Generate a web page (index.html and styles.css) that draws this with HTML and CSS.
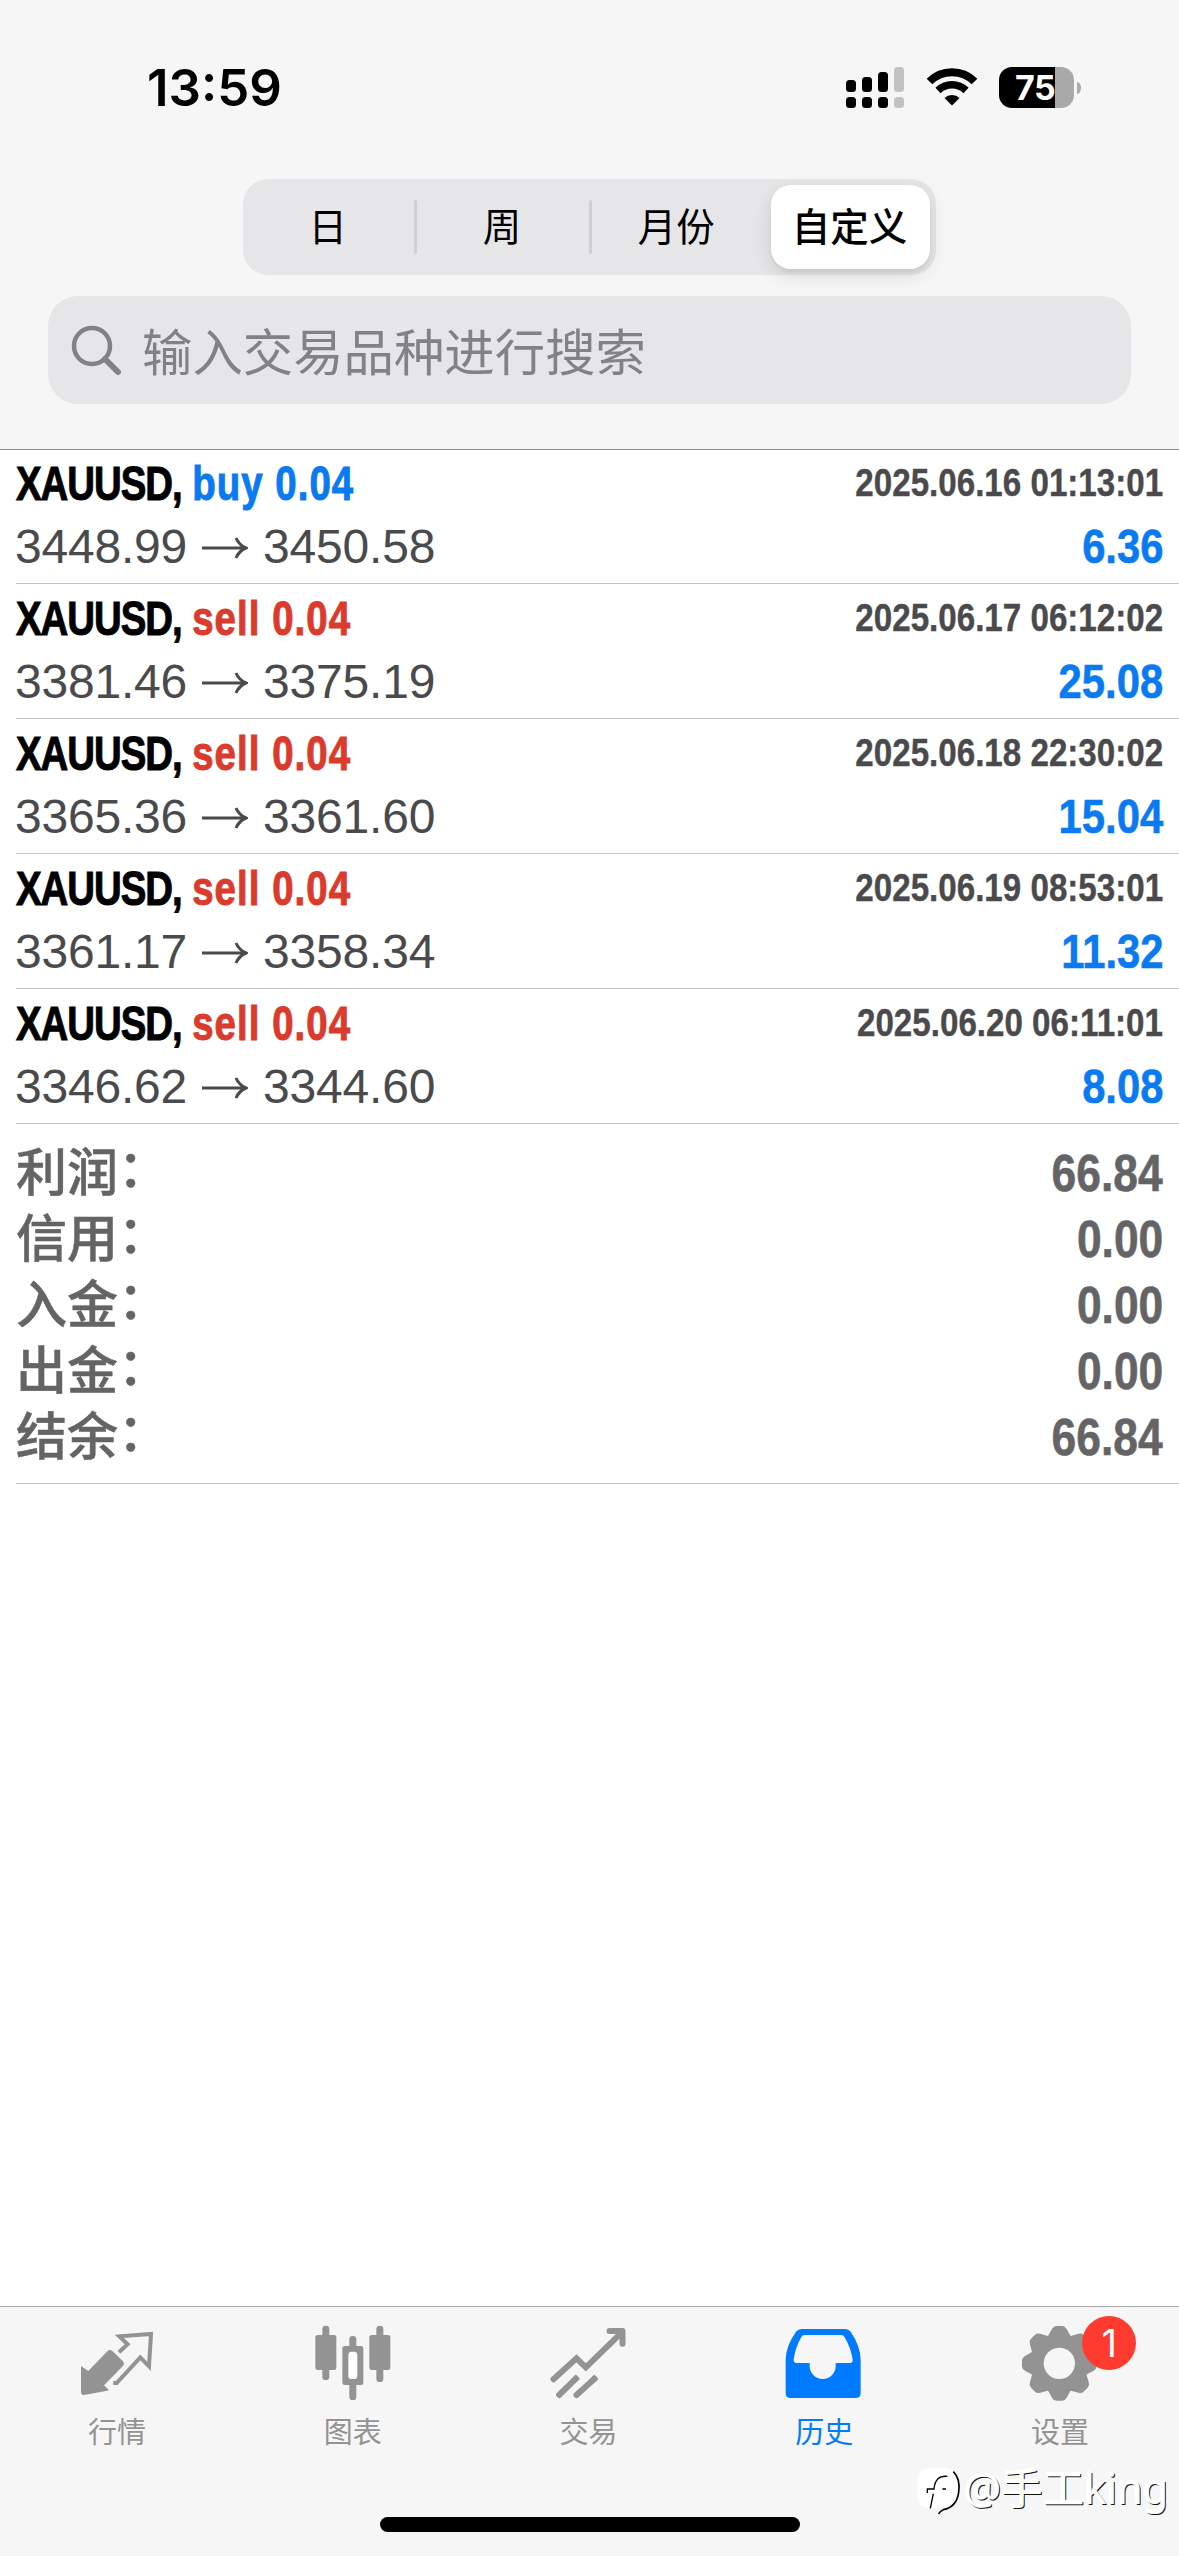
FILE: index.html
```html
<!DOCTYPE html>
<html lang="zh-CN">
<head>
<meta charset="utf-8">
<title>历史</title>
<link rel="stylesheet" href="styles.css">
</head>
<body>
<div class="screen">
  <header class="header">
    <div class="status">
      <span class="time">13:59</span>
      <div class="indicators">
        <svg class="signal" width="58" height="41" viewBox="0 0 58 41">
          <rect x="0" y="13" width="10" height="12" rx="3.5"/><rect x="16" y="10" width="10" height="15" rx="3.5"/><rect x="32" y="5" width="10" height="20" rx="3.5"/><rect class="dim" x="48" y="0" width="10" height="25" rx="3.5"/>
          <rect x="0" y="30" width="10" height="11" rx="3.5"/><rect x="16" y="30" width="10" height="11" rx="3.5"/><rect x="32" y="30" width="10" height="11" rx="3.5"/><rect class="dim" x="48" y="30" width="10" height="11" rx="3.5"/>
        </svg>
        <svg class="wifi" width="52" height="38" viewBox="0 0 52 38">
          <path d="M3.500 13.500A32 32 0 0 1 48.500 13.500" fill="none" stroke="#000" stroke-width="8"/>
          <path d="M12 22.500A20 20 0 0 1 40 22.500" fill="none" stroke="#000" stroke-width="7.500"/>
          <path d="M18.500 30A11 11 0 0 1 33.500 30L26 37.500Z"/>
        </svg>
        <div class="battery"><span class="level">75</span></div>
        <span class="tip"></span>
      </div>
    </div>
    <nav class="segments">
      <span class="segment">日</span><i class="divider"></i><span class="segment">周</span><i class="divider"></i><span class="segment">月份</span><span class="segment selected">自定义</span>
    </nav>
    <div class="search">
      <svg width="52" height="52" viewBox="0 0 52 52" fill="none" stroke="#828285"><circle cx="22" cy="22" r="18" stroke-width="4.500"/><path d="M35 35L48 48" stroke-width="6" stroke-linecap="round"/></svg>
      <span class="placeholder">输入交易品种进行搜索</span>
    </div>
  </header>

  <main class="content">
    <article class="deal">
      <div class="line"><span class="title"><b class="symbol">XAUUSD,</b> <b class="side buy">buy 0.04</b></span><time class="date">2025.06.16 01:13:01</time></div>
      <div class="line"><span class="prices">3448.99<svg class="arrow" width="46" height="22" viewBox="0 0 46 22"><path d="M0 11H44M34 1Q37 8 44 11Q37 14 34 21"/></svg>3450.58</span><span class="profit">6.36</span></div>
    </article>
    <article class="deal">
      <div class="line"><span class="title"><b class="symbol">XAUUSD,</b> <b class="side sell">sell 0.04</b></span><time class="date">2025.06.17 06:12:02</time></div>
      <div class="line"><span class="prices">3381.46<svg class="arrow" width="46" height="22" viewBox="0 0 46 22"><path d="M0 11H44M34 1Q37 8 44 11Q37 14 34 21"/></svg>3375.19</span><span class="profit">25.08</span></div>
    </article>
    <article class="deal">
      <div class="line"><span class="title"><b class="symbol">XAUUSD,</b> <b class="side sell">sell 0.04</b></span><time class="date">2025.06.18 22:30:02</time></div>
      <div class="line"><span class="prices">3365.36<svg class="arrow" width="46" height="22" viewBox="0 0 46 22"><path d="M0 11H44M34 1Q37 8 44 11Q37 14 34 21"/></svg>3361.60</span><span class="profit">15.04</span></div>
    </article>
    <article class="deal">
      <div class="line"><span class="title"><b class="symbol">XAUUSD,</b> <b class="side sell">sell 0.04</b></span><time class="date">2025.06.19 08:53:01</time></div>
      <div class="line"><span class="prices">3361.17<svg class="arrow" width="46" height="22" viewBox="0 0 46 22"><path d="M0 11H44M34 1Q37 8 44 11Q37 14 34 21"/></svg>3358.34</span><span class="profit">11.32</span></div>
    </article>
    <article class="deal">
      <div class="line"><span class="title"><b class="symbol">XAUUSD,</b> <b class="side sell">sell 0.04</b></span><time class="date">2025.06.20 06:11:01</time></div>
      <div class="line"><span class="prices">3346.62<svg class="arrow" width="46" height="22" viewBox="0 0 46 22"><path d="M0 11H44M34 1Q37 8 44 11Q37 14 34 21"/></svg>3344.60</span><span class="profit">8.08</span></div>
    </article>
    <section class="summary">
      <div class="total"><span class="label">利润<i>：</i></span><span class="amount">66.84</span></div>
      <div class="total"><span class="label">信用<i>：</i></span><span class="amount">0.00</span></div>
      <div class="total"><span class="label">入金<i>：</i></span><span class="amount">0.00</span></div>
      <div class="total"><span class="label">出金<i>：</i></span><span class="amount">0.00</span></div>
      <div class="total"><span class="label">结余<i>：</i></span><span class="amount">66.84</span></div>
    </section>
  </main>

  <footer class="tabbar">
    <nav class="tabs">
      <a class="tab">
        <svg width="80" height="80" viewBox="234 99 240 240"><path d="M243 228L265 243L322 184Q330 176 338 184L368 213Q376 222 368 229L312 286L327 300L318 303L252 315Q243 315 243 306Z"/><path d="M357 187L383 163L358 139L453 132L447 229L421 202L350 279H340" fill="none" stroke="currentColor" stroke-width="12"/></svg>
        <span>行情</span>
      </a>
      <a class="tab">
        <svg width="80" height="80" viewBox="941 99 240 240"><rect x="945" y="135" width="63" height="105" rx="7"/><rect x="966" y="107" width="21" height="163" rx="10"/><rect x="1107" y="135" width="63" height="105" rx="7"/><rect x="1128" y="107" width="21" height="169" rx="10"/><rect x="1026" y="168" width="63" height="117" rx="7"/><rect x="1047" y="138" width="21" height="192" rx="10"/><rect x="1044" y="185" width="27" height="82" rx="10" fill="#fff"/></svg>
        <span>图表</span>
      </a>
      <a class="tab">
        <svg width="80" height="80" viewBox="208.500 99 240 240" fill="none" stroke="currentColor" stroke-width="18" stroke-linecap="round"><path d="M222 268L291 205L319 232L424 130"/><path d="M390 123H429V161" stroke-linejoin="round"/><path d="M239 315L289 266M291 315L345 266"/><path d="M286 269L295 260M341 269L350 261" stroke-linecap="butt"/></svg>
        <span>交易</span>
      </a>
      <a class="tab active">
        <svg width="80" height="80" viewBox="916 99 240 240"><path fill-rule="evenodd" d="M966 117H1096Q1107 117 1113 125Q1143 169 1143 210V309Q1143 324 1128 324H932Q918 324 918 309V210Q918 169 949 125Q955 117 966 117ZM974 135Q968 135 965 141Q947 172 942 208Q941 219 951 219H990V228A39 39 0 0 0 1068 228V219H1108Q1120 219 1119 209Q1113 172 1095 142Q1091 135 1086 135Z"/></svg>
        <span>历史</span>
      </a>
      <a class="tab">
        <svg width="80" height="80" viewBox="423 99 240 240"><g transform="translate(538 220)"><path id="tooth" d="M-36 -78L-22 -103Q-17 -112 -9 -112H9Q17 -112 22 -103L36 -78Z"/><use href="#tooth" transform="rotate(45)"/><use href="#tooth" transform="rotate(90)"/><use href="#tooth" transform="rotate(135)"/><use href="#tooth" transform="rotate(180)"/><use href="#tooth" transform="rotate(225)"/><use href="#tooth" transform="rotate(270)"/><use href="#tooth" transform="rotate(315)"/><circle r="67" fill="none" stroke="currentColor" stroke-width="40"/></g></svg>
        <span>设置</span>
        <b class="badge">1</b>
      </a>
    </nav>
    <div class="home"></div>
    <div class="watermark">
      <svg width="46" height="50" viewBox="24 12 138 150"><rect x="22" y="28" width="122" height="120" rx="36" fill="#fff"/><path d="M130 38Q152 60 146 100Q140 144 100 152Q90 156 86 165" fill="none" stroke="#000" stroke-width="5"/><path d="M112 52Q76 48 72 90H52V102M70 104L61 148M97 90H108" fill="none" stroke="#000" stroke-width="4"/></svg>
      <span>@手工king</span>
    </div>
  </footer>
</div>
</body>
</html>
```
FILE: styles.css
```css
* { box-sizing: border-box; }
body { margin: 0; background: #fff; }
.screen {
  width: 1179px;
  height: 2556px;
  display: flex;
  flex-direction: column;
  overflow: hidden;
  background: #fff;
  font-family: "Liberation Sans", "Noto Sans CJK SC", sans-serif;
}

.header {
  height: 450px;
  flex: none;
  background: #f6f6f6;
  border-bottom: 1px solid #8b8b8d;
}
.status {
  height: 179px;
  padding: 0 98px 0 147px;
  display: flex;
  justify-content: space-between;
}
.time {
  margin-top: 58px;
  font: 600 51px/60px Inter, sans-serif;
  letter-spacing: 0;
}
.indicators { display: flex; height: 41px; margin-top: 67px; }
.dim { fill: #c2c2c2; }
.wifi { margin: 1px 21px 0 22px; }
.battery {
  width: 75px;
  height: 41px;
  border-radius: 13px;
  background: linear-gradient(90deg, #000 56px, #a9a9a9 56px);
}
.level {
  display: block;
  padding-left: 16px;
  color: #fff;
  font: 700 34px/41px Inter, sans-serif;
  letter-spacing: -.5px;
}
.tip {
  width: 4px;
  height: 12px;
  margin: 15px 0 0 3px;
  border-radius: 0 4px 4px 0 / 0 6px 6px 0;
  background: #a9a9a9;
}

.segments {
  width: 693px;
  height: 96px;
  margin: 0 auto 21px;
  padding: 6px 6px 6px 0;
  display: flex;
  align-items: center;
  border-radius: 25px;
  background: #e6e6e8;
  font: 400 38.500px/84px "Liberation Sans", "Noto Sans CJK SC", sans-serif;
}
.segment { flex: 1; padding: 1px 2px 0 0; height: 84px; text-align: center; }
.selected {
  flex: none;
  width: 159px;
  margin-left: 8px;
  border-radius: 20px;
  background: #fff;
  font-weight: 500;
  box-shadow: 0 6px 18px rgba(0, 0, 0, .12), 0 3px 3px rgba(0, 0, 0, .04);
}
.divider { width: 3px; height: 54px; border-radius: 2px; background: #cfcfd2; }

.search {
  height: 108px;
  margin: 0 48px;
  padding-left: 22px;
  display: flex;
  align-items: center;
  border-radius: 30px;
  background: #e6e6e8;
}
.placeholder {
  margin-left: 20px;
  color: #828285;
  font: 400 50.4px/106px "Noto Sans CJK SC", sans-serif;
}

.content { flex: 1; padding-left: 16px; }
.deal {
  height: 135px;
  padding: 8px 16px 0 0;
  border-bottom: 1px solid #c3c3c5;
}
.deal:first-child { height: 134px; padding-top: 7px; }
.line { display: flex; justify-content: space-between; height: 63px; line-height: 54px; }
.title { font-size: 48px; transform: scaleX(.8); transform-origin: left; white-space: nowrap; -webkit-text-stroke: 1px currentColor; }
.symbol { letter-spacing: -1.3px; }
.side { letter-spacing: 1.3px; }
.buy { color: #0a7af0; }
.sell { color: #db3b2d; }
.date {
  margin-top: -1px;
  font-size: 39px;
  font-weight: 700;
  color: #4a4a4c;
  transform: scaleX(.85);
  transform-origin: right;
  -webkit-text-stroke: .4px currentColor;
}
.prices { display: flex; align-items: center; height: 54px; margin-left: -1px; font-size: 48px; color: #4a4a4c; letter-spacing: -.2px; }
.arrow { margin: 2px 15px 0; fill: none; stroke: #4a4a4c; stroke-width: 3; }
.profit {
  color: #0a7af0;
  font-size: 48px;
  font-weight: 700;
  transform: scaleX(.87);
  transform-origin: right;
  -webkit-text-stroke: .6px currentColor;
}
.summary { height: 360px; padding: 16px 16px 0 0; border-bottom: 1px solid #c3c3c5; color: #646466; }
.total { display: flex; justify-content: space-between; height: 66px; line-height: 66px; }
.label { padding-top: 1px; font: 500 51px/66px "Liberation Sans", "Noto Sans CJK SC", sans-serif; -webkit-text-stroke: .5px currentColor; }
.label i { display: inline-block; font-style: normal; transform: translateY(-4px); }
.amount { padding-top: 1px; font-size: 51px; font-weight: 700; transform: scaleX(.87); transform-origin: right; -webkit-text-stroke: .6px currentColor; }

.tabbar {
  position: relative;
  height: 250px;
  flex: none;
  border-top: 1px solid #aaaaab;
  background: #f6f6f6;
}
.tabs { display: grid; grid-template-columns: repeat(5, 1fr); height: 210px; padding-top: 16px; }
.tab {
  position: relative;
  display: flex;
  flex-direction: column;
  align-items: center;
  color: #939393;
  font: 400 29px/44px "Liberation Sans", "Noto Sans CJK SC", sans-serif;
}
.tab svg { fill: currentColor; }
.tab svg[fill="none"] { fill: none; }
.tab span { margin: 8px 2px 0 0; }
.active { color: #007aff; }
.badge {
  position: absolute;
  left: 139px;
  top: -7px;
  width: 54px;
  height: 54px;
  border-radius: 50%;
  background: #ff3b30;
  color: #fff;
  font: 400 38px/54px Inter, sans-serif;
  text-align: center;
}
.home { width: 420px; height: 15px; margin: 0 auto; border-radius: 8px; background: #000; }
.watermark {
  position: absolute;
  left: 918px;
  top: 156px;
  display: flex;
  align-items: center;
  color: #fff;
  font: 400 41.500px/50px "Noto Sans", "Noto Sans CJK SC", sans-serif;
  text-shadow: -1px -1px 1px #fff, 1px 1px .5px #111;
}
.watermark svg { overflow: visible; }
```
